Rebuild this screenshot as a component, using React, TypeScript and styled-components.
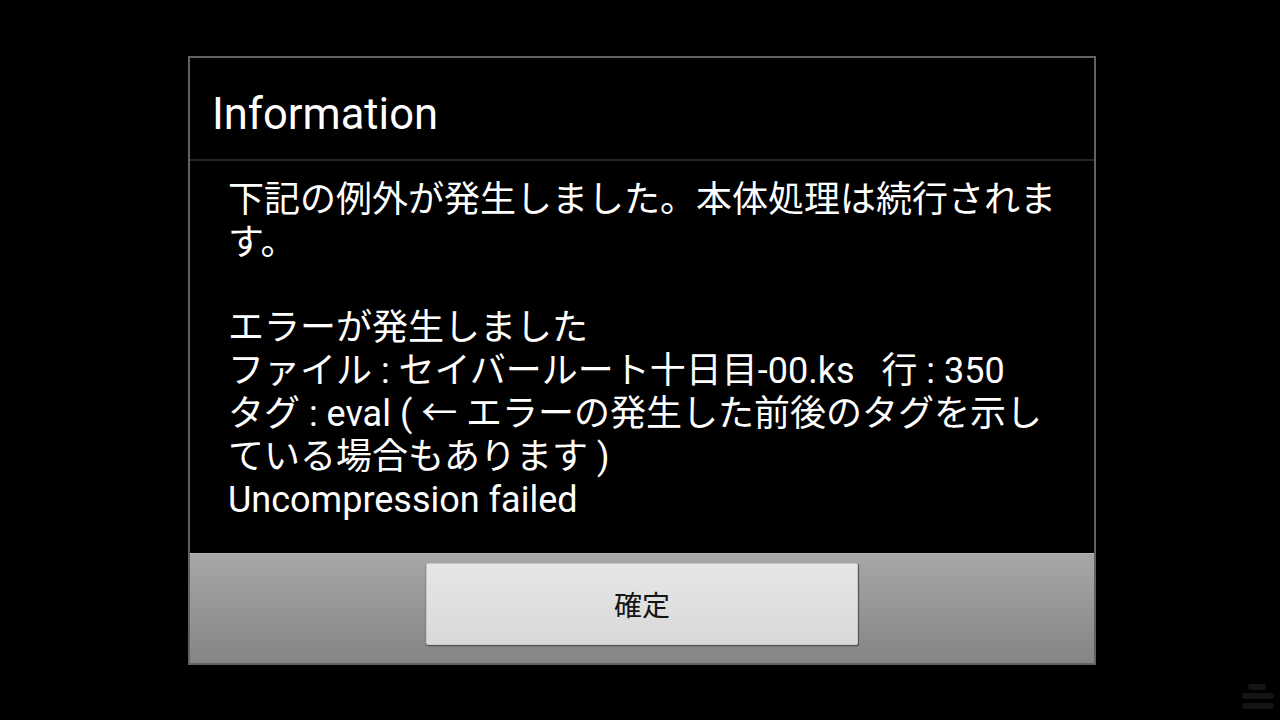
import React from "react";
import styled, { createGlobalStyle } from "styled-components";

const Global = createGlobalStyle`
  html, body { margin: 0; padding: 0; background: #000; }
  body { width: 1280px; height: 720px; overflow: hidden; font-family: Roboto, "Noto Sans CJK JP", sans-serif; }
`;

const Screen = styled.div`
  position: relative;
  width: 1280px;
  height: 720px;
  background: #000;
  padding: 56px 0 0 188px;
  box-sizing: border-box;
`;

const Dialog = styled.div`
  width: 908px;
  height: 609px;
  box-sizing: border-box;
  border: 2px solid #626262;
  display: flex;
  flex-direction: column;
  background: #000;
`;

const Header = styled.div`
  height: 103px;
  display: flex;
  align-items: center;
  padding-left: 22px;
  border-bottom: 2px solid #262626;
  box-sizing: border-box;
  flex-shrink: 0;
`;

const Title = styled.h1`
  margin: 0;
  padding-top: 11px;
  font-family: Roboto, sans-serif;
  font-weight: 400;
  font-size: 43.5px;
  color: #fff;
`;

const Body = styled.div`
  flex: 1;
  padding: 18px 36px 0 38px;
`;

const Message = styled.p`
  margin: 0;
  font-family: Roboto, "Noto Sans CJK JP", sans-serif;
  font-size: 36px;
  line-height: 42.8px;
  color: #fff;
  white-space: pre-wrap;
  width: 834px;
`;

const ButtonBar = styled.div`
  height: 110px;
  flex-shrink: 0;
  background: linear-gradient(#a7a7a7, #858585);
  border-top: 1px solid #b5b5b5;
  box-sizing: border-box;
  display: flex;
  justify-content: center;
  padding-top: 9px;
`;

const OkButton = styled.button`
  width: 432px;
  height: 82px;
  border: 1px solid #c8c8c8;
  border-radius: 2px;
  background: linear-gradient(#e6e6e6, #d9d9d9);
  box-shadow: 1px 1px 1px #555, 0 1px 2px rgba(0,0,0,0.4);
  font-family: Roboto, "Noto Sans CJK JP", sans-serif;
  font-size: 28px;
  color: #141414;
  padding: 0;
`;

const MenuIcon = styled.svg`
  position: absolute;
  right: 4px;
  bottom: 8px;
`;

const text = `下記の例外が発生しました。本体処理は続行されます。

エラーが発生しました
ファイル : セイバールート十日目-00.ks   行 : 350
タグ : eval ( ← エラーの発生した前後のタグを示している場合もあります )
Uncompression failed`;

export default function App() {
  return (
    <>
      <Global />
      <Screen>
        <Dialog>
          <Header>
            <Title>Information</Title>
          </Header>
          <Body>
            <Message>{text}</Message>
          </Body>
          <ButtonBar>
            <OkButton>確定</OkButton>
          </ButtonBar>
        </Dialog>
        <MenuIcon width="36" height="32" viewBox="0 0 36 32">
          <rect x="8" y="4" width="18" height="6" rx="3" fill="#141414" />
          <rect x="2" y="13" width="32" height="6" rx="3" fill="#141414" />
          <rect x="2" y="23" width="32" height="6" rx="3" fill="#141414" />
        </MenuIcon>
      </Screen>
    </>
  );
}
